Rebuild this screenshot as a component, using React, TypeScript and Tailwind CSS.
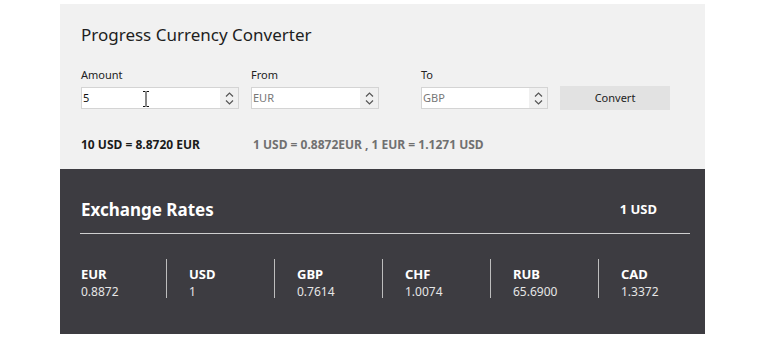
const font = { fontFamily: '"Noto Sans", "Open Sans", sans-serif' };

const rates = [
  { code: 'EUR', value: '0.8872' },
  { code: 'USD', value: '1' },
  { code: 'GBP', value: '0.7614' },
  { code: 'CHF', value: '1.0074' },
  { code: 'RUB', value: '65.6900' },
  { code: 'CAD', value: '1.3372' },
];

function Spinner() {
  return (
    <div className="flex h-full w-[18px] flex-col items-center justify-center gap-[3px] bg-[#f0f0f0]">
      <svg width="9" height="5" viewBox="0 0 9 5" fill="none" stroke="#555" strokeWidth="1.2">
        <path d="M1 4.5 L4.5 1 L8 4.5" />
      </svg>
      <svg width="9" height="5" viewBox="0 0 9 5" fill="none" stroke="#555" strokeWidth="1.2">
        <path d="M1 0.5 L4.5 4 L8 0.5" />
      </svg>
    </div>
  );
}

function Field({ label, value, width, muted, cursor }: { label: string; value: string; width: string; muted?: boolean; cursor?: boolean }) {
  return (
    <div className="flex w-[170px] flex-col">
      <span className="h-[19px] text-[11px] leading-[14px] text-[#222]">{label}</span>
      <div className={`relative flex h-[22px] items-stretch border border-[#d4d4d4] bg-white ${width}`}>
        <span className={`flex flex-1 items-center pl-[1px] text-[11px] ${muted ? 'text-[#777]' : 'text-[#111]'}`}>{value}</span>
        {cursor && (
          <svg className="absolute left-[60px] top-[3px]" width="8" height="16" viewBox="0 0 8 16" fill="none" stroke="#111" strokeWidth="1">
            <path d="M1 0.5 H3.5 M4.5 0.5 H7 M4 1 V15 M1 15.5 H3.5 M4.5 15.5 H7" />
          </svg>
        )}
        <Spinner />
      </div>
    </div>
  );
}

export default function App() {
  return (
    <div className="h-[339px] w-full bg-white pt-[4px]" style={font}>
      <div className="ml-[60px] w-[645px]">
        {/* converter */}
        <div className="h-[165px] bg-[#f1f1f1] pl-[21px]">
          <h1 className="pt-[18px] text-[17px] leading-[26px] text-[#1e1e1e]">Progress Currency Converter</h1>
          <div className="mt-[20px] flex items-end">
            <Field label="Amount" value="5" width="w-[158px]" cursor />
            <Field label="From" value="EUR" width="w-[128px]" muted />
            <div className="flex w-[139px] flex-col">
              <span className="h-[19px] text-[11px] leading-[14px] text-[#222]">To</span>
              <div className="flex h-[22px] w-[127px] items-stretch border border-[#d4d4d4] bg-white">
                <span className="flex flex-1 items-center pl-[1px] text-[11px] text-[#777]">GBP</span>
                <Spinner />
              </div>
            </div>
            <button className="mb-[-1px] h-[24px] w-[110px] bg-[#e2e2e2] text-[11px] text-[#222]">Convert</button>
          </div>
          <div className="mt-[28px] flex text-[12px] font-bold leading-[16px]">
            <span className="w-[172px] text-[#1a1a1a]">10 USD = 8.8720 EUR</span>
            <span className="text-[#707070]">1 USD = 0.8872EUR , 1 EUR = 1.1271 USD</span>
          </div>
        </div>

        {/* exchange rates */}
        <div className="h-[165px] bg-[#3d3c41] pl-[20px] pr-[15px] text-white">
          <div className="flex items-center justify-between pr-[33px] pt-[29px]">
            <span className="pl-[1px] text-[17px] font-bold leading-[24px]">Exchange Rates</span>
            <span className="text-[13px] font-bold">1 USD</span>
          </div>
          <div className="mt-[11px] h-px bg-[#cfcfcf]" />
          <div className="mt-[25px] flex pl-[1px]">
            {rates.map((r, i) => (
              <div
                key={r.code}
                className={`flex h-[39px] shrink-0 flex-col pt-[6px] ${i === 0 ? 'w-[85px]' : 'w-[108px] border-l border-[#bdbdbd] pl-[22px]'}`}
              >
                <span className="text-[13px] font-bold leading-[19px]">{r.code}</span>
                <span className="text-[12px] leading-[15px] text-[#e6e6e6]">{r.value}</span>
              </div>
            ))}
          </div>
        </div>
      </div>
    </div>
  );
}
